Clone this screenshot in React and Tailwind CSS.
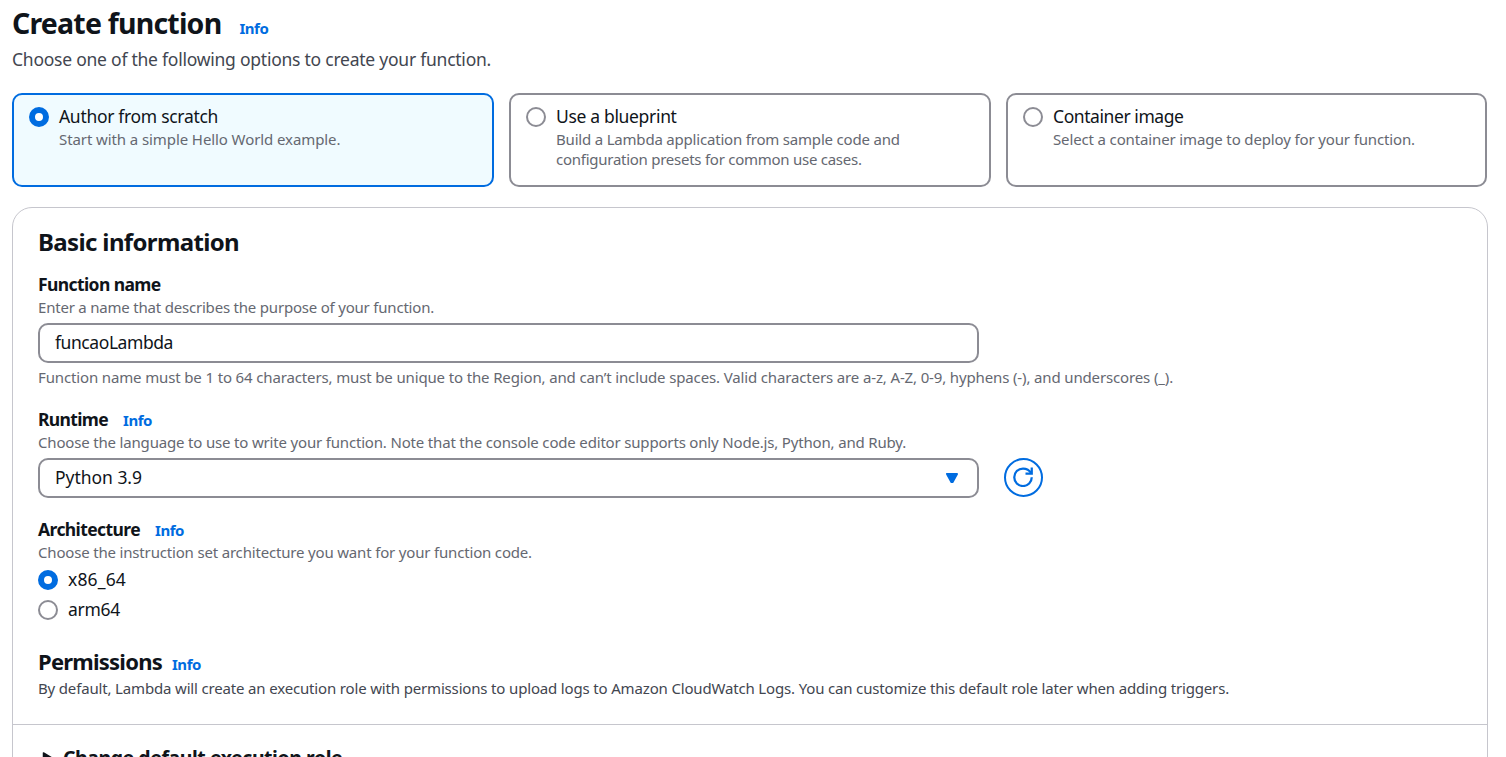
import React from "react";

function Info({ className = "" }) {
  return (
    <a href="#" className={`text-[15px] leading-5 font-bold tracking-[-0.44px] text-[#006ce0] ${className}`}>
      Info
    </a>
  );
}

function Radio({ checked }) {
  return (
    <span
      className={
        checked
          ? "block size-5 shrink-0 rounded-full border-6 border-[#006ce0] bg-white"
          : "block size-5 shrink-0 rounded-full border-2 border-[#8c8c94] bg-white"
      }
    />
  );
}

function OptionCard({ title, titleTracking, checked, children }) {
  return (
    <label
      className={`flex h-[94px] gap-2.5 rounded-[10px] border-2 px-[15px] py-[9px] ${
        checked ? "border-[#006ce0] bg-[#f0fbff]" : "border-[#8c8c94] bg-white"
      }`}
    >
      <span className="pt-[3px]">
        <Radio checked={checked} />
      </span>
      <span className="flex flex-col">
        <span className={`text-[17.5px] leading-[25px] whitespace-nowrap ${titleTracking}`}>{title}</span>
        <span className="flex flex-col text-[15px] leading-5 whitespace-nowrap text-[#656871]">{children}</span>
      </span>
    </label>
  );
}

function Label({ tracking, children, info }) {
  return (
    <div className="flex h-[25px] items-center">
      <span className={`text-[17.5px] leading-[25px] font-bold whitespace-nowrap ${tracking}`}>{children}</span>
      {info}
    </div>
  );
}

function Note({ tracking, className = "", children }) {
  return <p className={`text-[15px] leading-5 whitespace-nowrap text-[#656871] ${tracking} ${className}`}>{children}</p>;
}

export default function App() {
  return (
    <main className="h-[757px] w-[1506px] overflow-hidden bg-white pl-3 font-['Noto_Sans',sans-serif] text-[#0f141a]">
      <header className="flex h-[93px] flex-col pt-[3px]">
        <div className="flex items-baseline">
          <h1 className="text-[28.5px] leading-10 font-bold tracking-[-0.8px] whitespace-nowrap">Create function</h1>
          <Info className="ml-[18px]" />
        </div>
        <p className="mt-1 text-[17.5px] leading-[25px] tracking-[-0.24px] whitespace-nowrap text-[#424650]">
          Choose one of the following options to create your function.
        </p>
      </header>

      <div className="grid w-[1475px] grid-cols-[482px_482px_481px] gap-[15px]">
        <OptionCard title="Author from scratch" titleTracking="tracking-[-0.311px]" checked>
          <span className="tracking-[-0.09px]">Start with a simple Hello World example.</span>
        </OptionCard>
        <OptionCard title="Use a blueprint" titleTracking="tracking-[-0.33px]">
          <span className="tracking-[-0.195px]">Build a Lambda application from sample code and</span>
          <span className="tracking-[-0.26px]">configuration presets for common use cases.</span>
        </OptionCard>
        <OptionCard title="Container image" titleTracking="tracking-[-0.427px]">
          <span className="tracking-[-0.138px]">Select a container image to deploy for your function.</span>
        </OptionCard>
      </div>

      <section className="mt-5 h-[620px] w-[1476px] rounded-[20px] border border-[#c6c6cd]">
        <div className="h-[517px] border-b border-[#c6c6cd] px-[25px] pt-[19px]">
          <h2 className="text-[24px] leading-[30px] font-bold tracking-[-0.64px] whitespace-nowrap">Basic information</h2>

          <div className="mt-[15px]">
            <Label tracking="tracking-[-0.6px]">Function name</Label>
            <Note tracking="tracking-[-0.204px]">Enter a name that describes the purpose of your function.</Note>
            <div className="mt-1.5 flex h-10 w-[941px] items-center rounded-[10px] border-2 border-[#8c8c94] px-[15px] pb-0.5 text-[17.5px] tracking-[-0.429px]">
              funcaoLambda
            </div>
            <Note tracking="tracking-[-0.14px]" className="mt-1">
              Function name must be 1 to 64 characters, must be unique to the Region, and can’t include spaces. Valid
              characters are a-z, A-Z, 0-9, hyphens (-), and underscores (_).
            </Note>
          </div>

          <div className="mt-5">
            <Label tracking="tracking-[-0.652px]" info={<Info className="ml-[15px]" />}>
              Runtime
            </Label>
            <Note tracking="tracking-[-0.174px]">
              Choose the language to use to write your function. Note that the console code editor supports only Node.js,
              Python, and Ruby.
            </Note>
            <div className="mt-1.5 flex gap-[25px]">
              <div className="flex h-10 w-[941px] items-center justify-between rounded-[10px] border-2 border-[#8c8c94] pr-[18px] pl-[15px] text-[17.5px] tracking-[-0.031px]">
                <span className="pb-0.5">Python 3.9</span>
                <svg width="14" height="12" viewBox="0 0 14 12">
                  <path d="M2 2H12L7.6 10H6.4Z" fill="#006ce0" stroke="#006ce0" strokeWidth="2" strokeLinejoin="round" />
                </svg>
              </div>
              <button className="flex size-[39px] items-center justify-center rounded-full border-2 border-[#006ce0] pr-px pb-px">
                <svg width="20" height="20" viewBox="0 0 16 16" fill="none" stroke="#006ce0" strokeWidth="1.8">
                  <path d="M15 8.2c0 3.87-3.13 7-7 7s-7-3.13-7-7 3.13-7 7-7c2.79 0 5.2 1.43 6.6 3.8" />
                  <path d="M10 5.3h5V0.4" />
                </svg>
              </button>
            </div>
          </div>

          <div className="mt-[19px]">
            <Label tracking="tracking-[-0.599px]" info={<Info className="ml-[15px]" />}>
              Architecture
            </Label>
            <Note tracking="tracking-[-0.175px]">
              Choose the instruction set architecture you want for your function code.
            </Note>
            <div className="mt-[5px] flex flex-col gap-[5px] text-[17.5px] leading-[25px]">
              <label className="flex items-center gap-2.5 tracking-[0.155px]">
                <Radio checked />
                x86_64
              </label>
              <label className="flex items-center gap-2.5 tracking-[-0.285px]">
                <Radio />
                arm64
              </label>
            </div>
          </div>

          <div className="mt-6 flex items-baseline">
            <h3 className="text-[22px] leading-[30px] font-bold tracking-[-0.77px] whitespace-nowrap">Permissions</h3>
            <Info className="ml-2.5" />
          </div>
          <p className="mt-0.5 text-[15px] leading-5 tracking-[-0.163px] whitespace-nowrap text-[#424650]">
            By default, Lambda will create an execution role with permissions to upload logs to Amazon CloudWatch Logs.
            You can customize this default role later when adding triggers.
          </p>
        </div>

        <div className="flex items-center pt-[18px] pl-[29px]">
          <svg width="12" height="14" viewBox="0 0 12 14">
            <path d="M1.5 2V12L10 7Z" fill="#0f141a" stroke="#0f141a" strokeWidth="1.5" strokeLinejoin="round" />
          </svg>
          <h3 className="ml-[9px] text-[19.5px] leading-[30px] font-bold tracking-[-0.46px] whitespace-nowrap">
            Change default execution role
          </h3>
        </div>
      </section>
    </main>
  );
}
